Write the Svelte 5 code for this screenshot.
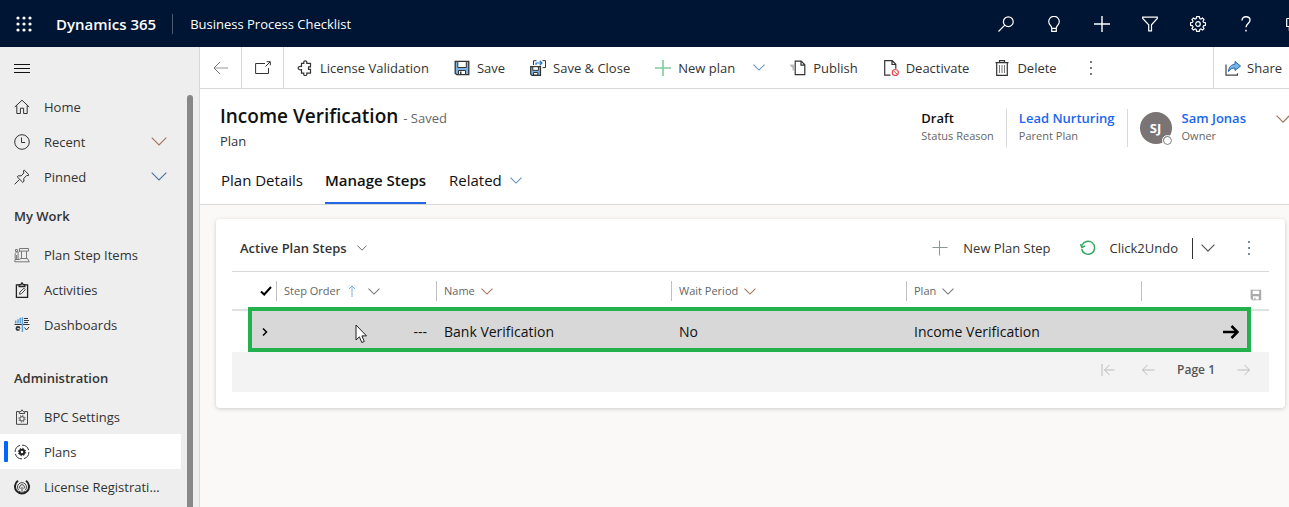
<script>
  const work = [
    { label: 'Plan Step Items', icon: 'steps' },
    { label: 'Activities', icon: 'activity' },
    { label: 'Dashboards', icon: 'dash' }
  ];
  const admin = [
    { label: 'BPC Settings', icon: 'bpc' },
    { label: 'Plans', icon: 'plans', active: true },
    { label: 'License Registration', icon: 'license' }
  ];
  const quick = [
    { label: 'Home', icon: 'home' },
    { label: 'Recent', icon: 'clock', more: 'warm' },
    { label: 'Pinned', icon: 'pin', more: 'cool' }
  ];
  const commands = [
    { label: 'License Validation', icon: 'puzzle' },
    { label: 'Save', icon: 'save' },
    { label: 'Save & Close', icon: 'saveclose' },
    { label: 'New plan', icon: 'add', more: true },
    { label: 'Publish', icon: 'publish' },
    { label: 'Deactivate', icon: 'deactivate' },
    { label: 'Delete', icon: 'trash' }
  ];
  const tools = ['search', 'bulb', 'plus', 'filter', 'gear', 'help', 'chat'];
  const columns = [
    { label: 'Name', tone: 'warm' },
    { label: 'Wait Period', tone: 'warm' },
    { label: 'Plan', tone: 'grey' }
  ];
</script>

{#snippet icon(name)}
  <svg class="icon" viewBox="0 0 16 16" width="16" height="16" aria-hidden="true">
    {#if name === 'home'}
      <path d="M.8 8 8 1.2 15.2 8M2.8 6.4v8.1h3.6V9.2h3.2v5.3h3.6V6.4" />
    {:else if name === 'clock'}
      <circle cx="8" cy="8" r="7.3" /><path d="M7.5 3.5v5h3.6" />
    {:else if name === 'pin'}
      <path d="M10.2 1 15 5.8l-1 .8-1.2-.2-3 3 .1 3-1.1 1L3.200 7.800l1-1 3 .1 2.600-2.900-.3-2zM5.400 10.500.7 15.300" />
    {:else if name === 'steps'}
      <g stroke="#777"><path d="M5.500 1.500h9v2.600h-9zM7.500 4.200v7.600M12.500 4.200v7.600M1 12.500h4l2-1h6.500l1.800 3.300H.8zM1.200 12V6.400L2.600 5l1.500 1.500V12M2.600 8v5M1.500 2.500h2v2h-2zM4 5.500l2-1.500" /></g>
    {:else if name === 'activity'}
      <path stroke="#222" stroke-width="1.300" d="M5 2.800H2.400v12.500h11.200V2.800H11M5.200 4.500V2.600h1.600L8 .8l1.200 1.800h1.600v1.900z" />
      <path stroke="#444" d="m5.500 12.300.4-2.100 4-4 1.400 1.500-3.900 4z" />
    {:else if name === 'dash'}
      <path stroke="#333" d="M.5 7.500h15M10 1.500h4M10 3.500h5M10 5.500h4M10.500 10.500l2 2.500 2.500-3" />
      <path stroke="#5da2dc" stroke-width="1.500" d="M1.700 3.500v3M4 2.300v4.200M6.200.8v5.700M8.400.3V15" />
      <circle cx="4" cy="11.500" r="1.600" stroke="#333" stroke-width="1.700" /><path stroke="#eee" d="M4 11.500l3 1" />
    {:else if name === 'bpc'}
      <path stroke="#444" d="M5 2.600H2.500v12.700h11V2.600H11M5.300 4.500V2.600h1.500L8 .8l1.200 1.800h1.500v1.900z" />
      <circle cx="8" cy="9.800" r="2.200" stroke="#444" /><circle cx="8" cy="9.800" r="3.200" stroke="#444" stroke-dasharray="1.200 1.300" />
    {:else if name === 'plans'}
      <circle cx="8" cy="8" r="6.900" stroke="#333" stroke-dasharray="8.800 2" />
      <circle cx="8" cy="8" r="2.300" stroke="#222" stroke-width="2" /><circle cx="8" cy="8" r="3.700" stroke="#222" stroke-dasharray="1.400 1.500" />
    {:else if name === 'license'}
      <path stroke="#222" stroke-width="2" d="M4 1.800a7 7 0 1 0 8 0" />
      <path stroke="#444" d="M4.800 11.300a4.500 4.500 0 1 1 6.400 0M6.300 9.800a2.400 2.400 0 1 1 3.400 0M8 8v4M5 12.300c2 1.200 4 1.200 6 0" />
    {:else if name === 'puzzle'}
      <path stroke="#333" stroke-width="1.200" d="M4.500 3.300h2.300c-.7-3.300 3.700-3.300 3 0h3.700v3.500h-2v2.600h2v3.800H9.800c.7 3.300-3.700 3.300-3 0H4.500V9.700c-4.500.7-4.500-3.900 0-3.200z" />
    {:else if name === 'save'}
      <path fill="#78b4e6" stroke="#333" stroke-width="1.300" d="M1.200 1.300h13.600v13.400H2.700l-1.500-1.500z" />
      <path fill="#fff" stroke="#333" d="M3.800 1.500h8.500v6H3.800zM4.500 14.500v-4h7v4z" /><path stroke="#333" stroke-width="1.500" d="M6.700 11.500v3" />
    {:else if name === 'saveclose'}
      <path stroke="#333" d="M3.500 5V.700h3M12.500.600h3v7h-3" /><path stroke="#2374c6" stroke-width="1.200" d="M6 5V3h6M9.700.800 12 3 9.700 5.200" />
      <path fill="#78b4e6" stroke="#333" stroke-width="1.200" d="M.700 6.600h9.800v8.800H2l-1.300-1.200z" />
      <path fill="#fff" stroke="#333" d="M2.800 6.700h5.600v3.700H2.800zM3.500 15v-2.500h4.300V15z" />
    {:else if name === 'add'}
      <path stroke="#7fcc9e" stroke-width="1.600" d="M8 0v16M0 8h16" />
    {:else if name === 'publish'}
      <path fill="#bbb" stroke="none" d="M0 4.500h4v6H2.500V8L0 5.500z" />
      <path fill="#fff" stroke="#333" stroke-width="1.200" d="M5.200 1.200h6l3.600 3.600v9.900H5.200zM11 1.300v3.800h3.700" />
    {:else if name === 'deactivate'}
      <path stroke="#333" stroke-width="1.200" d="M7.500 15.200H1.700V.700h7.500l3.600 3.500v4.500M9 .800v3.700h3.700" />
      <circle cx="12.300" cy="12.500" r="3" stroke="#e5484d" stroke-width="1.200" /><path stroke="#e5484d" d="m10.200 10.400 4.200 4.200" />
    {:else if name === 'trash'}
      <path stroke="#333" stroke-width="1.200" d="M1.500 2.700h13M5.500 2.500V.700h5v1.800M2.700 3v12.300h10.600V3" /><path stroke="#777" d="M5.500 5v8M8 5v8M10.500 5v8" />
    {:else if name === 'search'}
      <circle cx="10.300" cy="5.700" r="4.900" /><path d="M6.800 9.200.5 15.500" />
    {:else if name === 'bulb'}
      <path d="M5.700 15.300V12C5.700 9.500 2.700 9 2.700 5.600a5.300 5.300 0 0 1 10.600 0C13.300 9 10.300 9.500 10.300 12v3.300zM5.700 12.300h4.600" />
    {:else if name === 'plus'}
      <path stroke-width="1.400" d="M8 0v16M0 8h16" />
    {:else if name === 'filter'}
      <path d="M.700 1.200h14.600v1.200L9.500 8.800V14.800H6.700v-6L.700 2.400z" />
    {:else if name === 'gear'}
      <circle cx="8" cy="8" r="2.300" />
      <path d="m6.700.7 2.600 0 .5 1.900 1.100.5 1.700-1 1.400 1.400-1 1.700.5 1.100 1.900.4v2.600l-1.900.5-.5 1.100 1 1.700-1.400 1.400-1.700-1-1.100.5-.5 1.900H6.700l-.5-1.900-1.100-.5-1.700 1-1.400-1.400 1-1.700-.5-1.100L.6 9.300V6.700l1.900-.4.500-1.100-1-1.700 1.400-1.400 1.700 1 1.100-.5z" />
    {:else if name === 'help'}
      <path stroke-width="1.400" d="M4 4.500C4 2.200 5.500.8 8 .8s4 1.300 4 3.500c0 3-4 3.500-4 7M8 13.800v1.700" />
    {:else if name === 'chat'}
      <path d="M.7 2.500h15M.7 2.500v8h2.600v3l3-3h9" />
    {:else if name === 'back'}
      <path stroke="#aaa" stroke-width="1.200" d="M15 8H1" /><path stroke="#777" d="M7.200 1.800 1 8l6.200 6.200" />
    {:else if name === 'popout'}
      <path stroke="#333" d="M10 3.500H.6v10h12.900V8M10.500 6.500l4.500-4.500M11.700 1.700h3.600v3.600" />
    {:else if name === 'share'}
      <path stroke="#444" stroke-width="1.200" d="M1 4.500v10.700h11.500v-2" />
      <path fill="#78b4e6" stroke="#1d64a8" d="M10 1.500 15.500 6 10 10.500V8C7 8 5 9 3.500 11.500 3.700 7 6.500 4.500 10 4.200z" />
    {:else if name === 'undo'}
      <path stroke="#35a860" stroke-width="1.400" d="M2 5.500a6.500 6.500 0 1 1-.3 3.500M.500 4l1.300 3.500L5 6" />
    {:else if name === 'disk'}
      <path fill="#aaa" stroke="none" fill-rule="evenodd" d="M2 2h13v13H4l-2-2zM4.500 3.500h8v4h-8zM5 10v4h1.500v-2H8v2h4v-4z" />
    {/if}
  </svg>
{/snippet}

{#snippet chevron(tone)}
  <svg class="chevron {tone}" viewBox="0 0 16 9" aria-hidden="true"><path d="m.7.7 7.300 7.300L15.300.7" /></svg>
{/snippet}

{#snippet dots()}
  <svg class="dots" viewBox="0 0 4 16" width="4" height="16" aria-hidden="true"><path d="M1 1h2v2H1zM1 7h2v2H1zM1 13h2v2H1z" /></svg>
{/snippet}

{#snippet navItem(item)}
  <li>
    <a href="#top" class:active={item.active} aria-current={item.active ? 'page' : undefined}>
      {@render icon(item.icon)}
      <span class="label">{item.label}</span>
      {#if item.more}{@render chevron(item.more)}{/if}
    </a>
  </li>
{/snippet}

<div class="app">
  <header class="topbar">
    <button class="waffle" aria-label="App launcher">
      <svg viewBox="0 0 16 16" width="16" height="16" aria-hidden="true">
        {#each [2, 8, 14] as y}{#each [2, 8, 14] as x}<circle cx={x} cy={y} r="1.600" />{/each}{/each}
      </svg>
    </button>
    <a class="brand" href="#top">Dynamics 365</a>
    <a class="appname" href="#top">Business Process Checklist</a>
    <div class="tools">
      {#each tools as t}<button aria-label={t}>{@render icon(t)}</button>{/each}
    </div>
  </header>

  <div class="body">
    <nav class="sidebar">
      <button class="menu" aria-label="Toggle navigation">
        <svg viewBox="0 0 16 12" width="16" height="12" aria-hidden="true"><path d="M0 2.500h16M0 6.500h16M0 10.500h16" /></svg>
      </button>
      <ul>{#each quick as item}{@render navItem(item)}{/each}</ul>
      <h2>My Work</h2>
      <ul class="group">{#each work as item}{@render navItem(item)}{/each}</ul>
      <h2>Administration</h2>
      <ul>{#each admin as item}{@render navItem(item)}{/each}</ul>
      <div class="thumb"></div>
    </nav>

    <main>
      <div class="commands">
        <button class="square" aria-label="Back">{@render icon('back')}</button>
        <button class="square" aria-label="Open in new window">{@render icon('popout')}</button>
        <div class="list">
          {#each commands as c}
            <button class="command">{@render icon(c.icon)}<span>{c.label}</span>{#if c.more}{@render chevron('blue')}{/if}</button>
          {/each}
          <button class="command more" aria-label="More commands">{@render dots()}</button>
        </div>
        <button class="share">{@render icon('share')}<span>Share</span></button>
      </div>

      <section class="record">
        <div class="summary">
          <div class="title">
            <h1>Income Verification <small>- Saved</small></h1>
            <p>Plan</p>
          </div>
          <div class="facts">
            <div class="fact"><strong>Draft</strong><span>Status Reason</span></div>
            <div class="fact"><a href="#top">Lead Nurturing</a><span>Parent Plan</span></div>
            <div class="fact owner">
              <div class="avatar">SJ<i></i></div>
              <div class="who"><a href="#top">Sam Jonas</a><span>Owner</span></div>
            </div>
            <button class="expand" aria-label="Expand header">{@render chevron('warm')}</button>
          </div>
        </div>
        <div class="tabs" role="tablist">
          <button role="tab" aria-selected="false">Plan Details</button>
          <button role="tab" aria-selected="true" class="selected">Manage Steps</button>
          <button role="tab" aria-selected="false">Related {@render chevron('blue')}</button>
        </div>
      </section>

      <section class="card">
        <div class="cardbar">
          <button class="view">Active Plan Steps {@render chevron('dark tiny')}</button>
          <div class="actions">
            <button class="newstep"><svg class="icon" viewBox="0 0 16 16" width="16" height="16" aria-hidden="true"><path stroke="#8a9a90" d="M.500 7.500h15M7.500.500v15" /></svg>New Plan Step</button>
            <button class="undo">{@render icon('undo')}Click2Undo</button>
            <button class="split" aria-label="More undo options">{@render chevron('dark')}</button>
            <button class="kebab" aria-label="More actions">{@render dots()}</button>
          </div>
        </div>
        <table>
          <colgroup>
            <col class="c-pad" /><col class="c-check" /><col class="c-order" /><col class="c-wide" /><col class="c-wide" /><col class="c-wide" /><col />
          </colgroup>
          <thead>
            <tr>
              <td></td>
              <td class="check"><svg viewBox="0 0 12 10" width="12" height="10" aria-hidden="true"><path d="m1 5.500 3.200 3L11 1" /></svg></td>
              <th scope="col">
                <div>Step Order
                  <svg class="sort" viewBox="0 0 8 12" width="8" height="12" aria-hidden="true"><path d="M4 12V1M1 4l3-3 3 3" /></svg>
                  {@render chevron('grey')}</div>
              </th>
              {#each columns as c}<th scope="col"><div>{c.label} {@render chevron(c.tone)}</div></th>{/each}
              <td><div class="savecell">{@render icon('disk')}</div></td>
            </tr>
          </thead>
          <tbody>
            <tr>
              <td class="edge"></td>
              <td class="check"><svg viewBox="0 0 8 10" width="8" height="10" aria-hidden="true"><path class="thin" d="m3 1.500 3.500 3.500L3 8.500" /></svg></td>
              <td class="number">---</td>
              <td>Bank Verification</td>
              <td>No</td>
              <td>Income Verification</td>
              <td class="open"><svg viewBox="0 0 16 14" width="16" height="14" aria-hidden="true"><path d="M0 7h14.500M8.500 1l6 6-6 6" /></svg></td>
            </tr>
          </tbody>
        </table>
        <div class="pager">
          <button aria-label="First page"><svg viewBox="0 0 14 12" width="14" height="12" aria-hidden="true"><path d="M1 0v12M13.500 6H3.500M8.500 1l-5 5 5 5" /></svg></button>
          <button aria-label="Previous page"><svg viewBox="0 0 14 12" width="14" height="12" aria-hidden="true"><path d="M13.500 6H1.500M6.500 1l-5 5 5 5" /></svg></button>
          <span>Page 1</span>
          <button aria-label="Next page"><svg viewBox="0 0 14 12" width="14" height="12" aria-hidden="true"><path d="M.5 6h12M7.500 1l5 5-5 5" /></svg></button>
        </div>
        <svg class="pointer" viewBox="0 0 12 20" width="12" height="20" aria-hidden="true"><path d="M1 1v15l3.400-3.200 2.400 5.700 2.500-1-2.400-5.600h4.600z" /></svg>
      </section>
    </main>
  </div>
</div>

<style>
  :global(body) { margin: 0; overflow: hidden; }
  .app {
    min-height: 100vh; display: flex; flex-direction: column;
    font: 13px/20px "Segoe UI", "Open Sans", sans-serif; color: #333; background: #faf9f8;
  }
  .app :global(*) { box-sizing: border-box; }
  button { font: inherit; color: inherit; background: none; border: 0; padding: 0; display: flex; align-items: center; white-space: nowrap; }
  a { color: inherit; text-decoration: none; }
  h1, h2, p, ul { margin: 0; padding: 0; }
  ul { list-style: none; }
  svg { fill: none; stroke: currentColor; flex: none; display: block; }
  .icon { stroke-width: 1; }

  .chevron { width: 12px; height: 7px; stroke: #777; stroke-width: 1.4; }
  .chevron.blue { stroke: #5f90bd; }
  .chevron.warm { stroke: #a4745a; }
  .chevron.cool { stroke: #4a749c; }
  .chevron.dark { stroke: #555; width: 14px; height: 8px; }
  .chevron.dark.tiny { width: 10px; height: 6px; }
  .dots { fill: #777; stroke: none; }

  .topbar { display: flex; align-items: center; height: 47px; background: #001433; color: #fff; overflow: hidden; }
  .topbar .icon { stroke-width: 1.2; }
  .waffle { padding: 0 16px; }
  .waffle svg { fill: #fff; stroke: none; }
  .brand { font-size: 15px; font-weight: 600; padding: 0 16px 0 8px; border-right: 1px solid #4a5870; white-space: nowrap; }
  .appname { padding-left: 17px; white-space: nowrap; }
  .tools { display: flex; flex: none; gap: 32px; margin-left: auto; margin-right: -13px; }

  .body { flex: 1; display: flex; min-width: 0; }
  .sidebar { position: relative; flex: none; width: 200px; background: #eee; border-right: 1px solid #d8d8d8; }
  .menu { height: 42px; padding: 0 14px; color: #111; }
  .sidebar a { display: flex; align-items: center; height: 35px; margin-right: 18px; padding: 0 14px; gap: 14px; }
  .sidebar .label { flex: 1; overflow: hidden; text-overflow: ellipsis; white-space: nowrap; padding-right: 4px; }
  .sidebar .chevron { width: 16px; height: 9px; stroke-width: 1.1; }
  .sidebar a.active { background: #fff; position: relative; }
  .sidebar a.active::before { content: ''; position: absolute; left: 4px; top: 7px; width: 4px; height: 21px; background: #06f; border-radius: 1px; }
  h2 { font-size: 13px; line-height: 42px; font-weight: 600; padding: 1px 0 0 14px; }
  .group { margin-bottom: 14px; }
  .thumb { position: absolute; top: 48px; bottom: 0; right: 6px; width: 6px; background: #888; border-radius: 3px 3px 0 0; }

  main { flex: 1; min-width: 0; }
  .commands { display: flex; height: 42px; background: #fff; border-bottom: 1px solid #d8d8d8; }
  .square { flex: none; width: 42px; justify-content: center; border-right: 1px solid #d8d8d8; }
  .list { flex: 1; display: flex; min-width: 0; }
  .command { gap: 7px; padding: 0 12px 0 13px; }
  .command .chevron { margin-left: 11px; }
  .more { padding: 0 20px; }
  .share { flex: none; gap: 6px; padding: 0 7px 0 11px; border-left: 1px solid #d8d8d8; }

  .record { background: #fff; border-bottom: 1px solid #d8d8d8; padding: 15px 0 0 20px; }
  .summary { display: flex; justify-content: space-between; height: 68px; }
  h1 { font-size: 19px; line-height: 24px; font-weight: 600; color: #111; }
  small { font-size: 13px; font-weight: 400; color: #666; }
  .title p { line-height: 22px; }
  .facts { display: flex; align-items: flex-start; margin-right: -1px; }
  .fact { display: flex; flex-direction: column; font-size: 11px; line-height: 18px; color: #666; height: 38px; margin-top: 5px; padding: 0 12px; border-right: 1px solid #d8d8d8; }
  .fact strong, .fact a { font-size: 13px; font-weight: 600; color: #111; }
  .fact a { color: #1a66f0; }
  .owner { flex-direction: row; gap: 10px; border: 0; }
  .who { display: flex; flex-direction: column; }
  .avatar { position: relative; width: 32px; height: 32px; margin-top: 3px; border-radius: 50%; background: #7a7574; color: #fff; font-size: 13px; font-weight: 700; line-height: 32px; text-align: center; }
  .avatar i { position: absolute; right: 0; bottom: -1px; width: 9px; height: 9px; border: 1px solid #777; border-radius: 50%; background: #fff; outline: 1px solid #fff; }
  .expand { margin: 11px 0 0 18px; }
  .expand .chevron { width: 14px; height: 8px; }
  .tabs { display: flex; gap: 22px; font-size: 15px; color: #111; }
  .tabs button { height: 32px; padding: 0 0 14px 1px; gap: 8px; border-bottom: 2px solid transparent; }
  .tabs .selected { font-weight: 600; border-color: #2266e3; padding-left: 0; }

  .card { position: relative; margin: 14px 4px 0 16px; padding: 0 16px 16px; background: #fff; border-radius: 4px; box-shadow: 0 1px 4px rgba(0, 0, 0, .18); }
  .cardbar { display: flex; justify-content: space-between; height: 53px; padding: 6px 18px 0 8px; border-bottom: 1px solid #d8d8d8; }
  .view { gap: 10px; font-weight: 600; }
  .actions { display: flex; align-items: center; }
  .newstep { gap: 15px; }
  .undo { margin-left: 29px; gap: 14px; }
  .split { height: 21px; margin-left: 14px; padding-left: 8px; border-left: 1px solid #333; }
  .kebab { margin-left: 32px; }
  .kebab .dots { fill: #6f8fa8; }

  table { width: 100%; table-layout: fixed; border-collapse: separate; border-spacing: 0; }
  .c-pad { width: 16px; } .c-check { width: 28px; } .c-order { width: 160px; } .c-wide { width: 235px; }
  th, td { padding: 0; text-align: left; white-space: nowrap; }
  thead tr > * { height: 39px; padding-top: 1px; border-bottom: 2px solid #e0e0e0; }
  th { font-size: 11px; font-weight: 400; color: #666; }
  th div, .savecell { display: flex; align-items: center; gap: 6px; height: 20px; padding-left: 7px; border-left: 1px solid #c0c0c0; }
  .savecell { justify-content: flex-end; align-items: flex-end; padding-right: 7px; }
  .savecell .icon { width: 13px; height: 13px; }
  .sort { stroke: #7fb0dc; margin: 0 6px 0 2px; }
  .check svg { margin-left: 12px; stroke: #000; stroke-width: 2; }
  tbody tr { position: relative; z-index: 0; font-size: 14px; color: #111; }
  .edge::before { content: ''; position: absolute; z-index: -1; left: 16px; right: 18px; top: -4px; bottom: 0; background: #d8d8d8; border: 4px solid #22b14c; }
  tbody td { height: 41px; padding-left: 8px; }
  tbody td.edge, tbody td.check { padding: 0; }
  .check .thin { stroke-width: 1.5; }
  td.number { text-align: right; padding-right: 9px; }
  .open svg { margin: 0 30px 0 auto; stroke: #000; stroke-width: 2.5; }

  .pager { display: flex; align-items: center; justify-content: flex-end; height: 40px; padding: 0 18px 4px 0; background: #f3f3f3; font-size: 12px; font-weight: 600; color: #555; }
  .pager button { color: #bbb; margin-left: 26px; }
  .pager span { margin-left: 22px; }
  .pager span + button { margin-left: 22px; }
  .pointer { position: absolute; left: 139px; top: 105px; fill: #fff; stroke: #222; }
</style>
